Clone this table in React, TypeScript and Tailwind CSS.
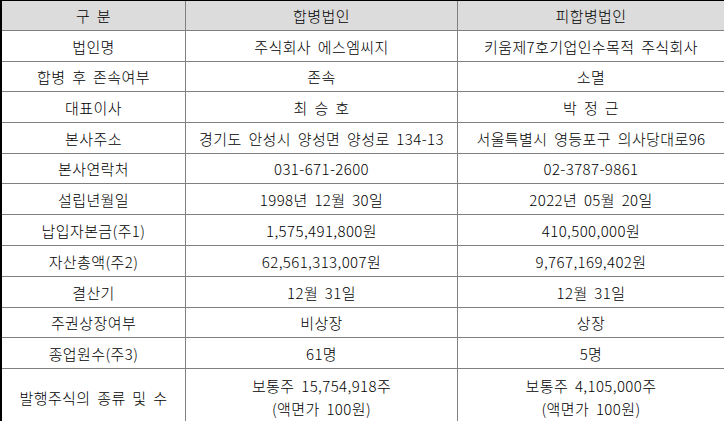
const rows: { label: string; a: string[]; b: string[]; h: string }[] = [
  { label: "법인명", a: ["주식회사 에스엠씨지"], b: ["키움제7호기업인수목적 주식회사"], h: "h-[31px]" },
  { label: "합병 후 존속여부", a: ["존속"], b: ["소멸"], h: "h-[30px]" },
  { label: "대표이사", a: ["최 승 호"], b: ["박 정 근"], h: "h-[31px]" },
  { label: "본사주소", a: ["경기도 안성시 양성면 양성로 134-13"], b: ["서울특별시 영등포구 의사당대로96"], h: "h-[31px]" },
  { label: "본사연락처", a: ["031-671-2600"], b: ["02-3787-9861"], h: "h-[30px]" },
  { label: "설립년월일", a: ["1998년 12월 30일"], b: ["2022년 05월 20일"], h: "h-[31px]" },
  { label: "납입자본금(주1)", a: ["1,575,491,800원"], b: ["410,500,000원"], h: "h-[31px]" },
  { label: "자산총액(주2)", a: ["62,561,313,007원"], b: ["9,767,169,402원"], h: "h-[31px]" },
  { label: "결산기", a: ["12월 31일"], b: ["12월 31일"], h: "h-[31px]" },
  { label: "주권상장여부", a: ["비상장"], b: ["상장"], h: "h-[30px]" },
  { label: "종업원수(주3)", a: ["61명"], b: ["5명"], h: "h-[31px]" },
  {
    label: "발행주식의 종류 및 수",
    a: ["보통주 15,754,918주", "(액면가 100원)"],
    b: ["보통주 4,105,000주", "(액면가 100원)"],
    h: "h-[56px]",
  },
];

const Cell = ({ lines, w, last }: { lines: string[]; w: string; last?: boolean }) => (
  <div
    className={`${w} flex flex-col items-center justify-center leading-[23px] ${
      last ? "" : "border-r border-[#808080]"
    }`}
  >
    {lines.map((l) => (
      <span key={l} className="whitespace-nowrap">
        {l}
      </span>
    ))}
  </div>
);

export default function App() {
  return (
    <div
      className="w-[724px] h-[421px] overflow-hidden bg-white text-black text-[15px] font-light tracking-[0.4px] [word-spacing:3px]"
      style={{ fontFamily: '"Noto Sans CJK KR", "Noto Sans", sans-serif' }}
    >
      <div className="border-t border-l-2 border-black">
        <div className="flex h-[30px] bg-[#dcdcdc] border-b border-[#808080]">
          <Cell lines={["구 분"]} w="w-[184px]" />
          <Cell lines={["합병법인"]} w="w-[272px]" />
          <Cell lines={["피합병법인"]} w="flex-1" last />
        </div>
        {rows.map((r) => (
          <div key={r.label} className={`flex ${r.h} border-b border-[#808080] last:border-b-0`}>
            <Cell lines={[r.label]} w="w-[184px]" />
            <Cell lines={r.a} w="w-[272px]" />
            <Cell lines={r.b} w="flex-1" last />
          </div>
        ))}
      </div>
    </div>
  );
}
